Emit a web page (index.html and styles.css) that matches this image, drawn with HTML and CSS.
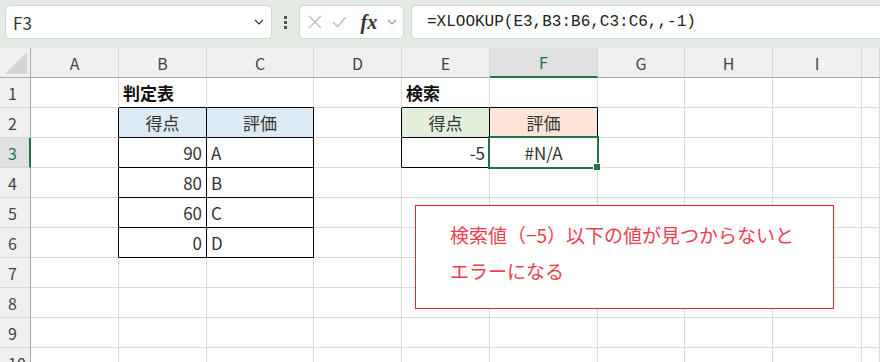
FILE: index.html
```html
<!DOCTYPE html>
<html lang="ja">
<head>
    <meta charset="UTF-8">
    <title>XLOOKUP</title>
    <link rel="stylesheet" href="styles.css">
</head>
<body>
    <div class="formula-bar">
        <div class="name-box">
            <span>F3</span>
            <svg class="chev" width="10" height="6" viewBox="0 0 10 6"><path d="M1 1l4 4 4-4" fill="none" stroke="#333" stroke-width="1.2"/></svg>
        </div>
        <div class="dots"><i></i><i></i><i></i></div>
        <div class="fx-box">
            <svg width="14" height="14" viewBox="0 0 14 14"><path d="M1 1l12 12M13 1L1 13" stroke="#bdbdbd" stroke-width="1.3"/></svg>
            <svg width="15" height="12" viewBox="0 0 15 12"><path d="M1 6l4.5 4.5L14 1" fill="none" stroke="#bdbdbd" stroke-width="1.3"/></svg>
            <span class="fx">fx</span>
            <svg width="10" height="6" viewBox="0 0 10 6"><path d="M1 1l4 4 4-4" fill="none" stroke="#999" stroke-width="1.1"/></svg>
        </div>
        <div class="formula">=XLOOKUP(E3,B3:B6,C3:C6,,-1)</div>
    </div>

    <div class="sheet">
        <div class="corner"><i></i></div>
        <div class="ch">A</div><div class="ch">B</div><div class="ch">C</div><div class="ch">D</div><div class="ch">E</div>
        <div class="ch sel">F</div><div class="ch">G</div><div class="ch">H</div><div class="ch">I</div><div class="ch"></div>

        <div class="rh">1</div>
        <div class="c"></div><div class="c bb bold">判定表</div><div class="c bb"></div><div class="c"></div>
        <div class="c bb bold">検索</div><div class="c bb"></div><div class="c"></div><div class="c"></div><div class="c"></div><div class="c"></div>

        <div class="rh">2</div>
        <div class="c br"></div><div class="c t blue mid">得点</div><div class="c t blue mid">評価</div><div class="c br"></div>
        <div class="c t green mid">得点</div><div class="c t orange mid">評価</div><div class="c"></div><div class="c"></div><div class="c"></div><div class="c"></div>

        <div class="rh sel">3</div>
        <div class="c br"></div><div class="c t num">90</div><div class="c t">A</div><div class="c br"></div>
        <div class="c t num">-5</div><div class="c t mid active">#N/A<span class="cursor"></span><span class="handle"></span></div><div class="c"></div><div class="c"></div><div class="c"></div><div class="c"></div>

        <div class="rh">4</div>
        <div class="c br"></div><div class="c t num">80</div><div class="c t">B</div><div class="c"></div>
        <div class="c"></div><div class="c"></div><div class="c"></div><div class="c"></div><div class="c"></div><div class="c"></div>

        <div class="rh">5</div>
        <div class="c br"></div><div class="c t num">60</div><div class="c t">C</div><div class="c"></div>
        <div class="c"></div><div class="c"></div><div class="c"></div><div class="c"></div><div class="c"></div><div class="c"></div>

        <div class="rh">6</div>
        <div class="c br"></div><div class="c t num">0</div><div class="c t">D</div><div class="c"></div>
        <div class="c"></div><div class="c"></div><div class="c"></div><div class="c"></div><div class="c"></div><div class="c"></div>

        <div class="rh">7</div>
        <div class="c"></div><div class="c"></div><div class="c"></div><div class="c"></div>
        <div class="c"></div><div class="c"></div><div class="c"></div><div class="c"></div><div class="c"></div><div class="c"></div>

        <div class="rh">8</div>
        <div class="c"></div><div class="c"></div><div class="c"></div><div class="c"></div>
        <div class="c"></div><div class="c"></div><div class="c"></div><div class="c"></div><div class="c"></div><div class="c"></div>

        <div class="rh">9</div>
        <div class="c"></div><div class="c"></div><div class="c"></div><div class="c"></div>
        <div class="c"></div><div class="c"></div><div class="c"></div><div class="c"></div><div class="c"></div><div class="c"></div>

        <div class="rh">10</div>
        <div class="c"></div><div class="c"></div><div class="c"></div><div class="c"></div>
        <div class="c"></div><div class="c"></div><div class="c"></div><div class="c"></div><div class="c"></div><div class="c"></div>

        <div class="note">検索値（−5）以下の値が見つからないと<br>エラーになる</div>
    </div>
</body>
</html>
```

FILE: styles.css
```css
body {
    margin: 0;
    height: 362px;
    overflow: hidden;
    background: #fff;
    font-family: "Noto Sans CJK JP", sans-serif;
    color: #333;
}

/* formula bar */
.formula-bar {
    height: 48px;
    box-sizing: border-box;
    padding: 5px 0 0 5px;
    background: #e4ebe4;
    display: flex;
    align-items: flex-start;
}

.name-box,
.fx-box,
.formula {
    height: 34px;
    box-sizing: border-box;
    background: #fff;
    border: 1px solid #d3d8d3;
    border-radius: 5px;
    display: flex;
    align-items: center;
}

.name-box {
    width: 267px;
    padding: 0 7px 0 7px;
    justify-content: space-between;
    font-size: 17px;
    color: #333;
}

.dots {
    width: 27px;
    height: 34px;
    display: flex;
    flex-direction: column;
    align-items: center;
    justify-content: center;
    gap: 2px;
}

.dots i {
    width: 3px;
    height: 3px;
    background: #555;
}

.fx-box {
    width: 105px;
    padding: 0 6px 0 8px;
    justify-content: space-between;
}

.fx {
    font-family: "Liberation Serif", serif;
    font-style: italic;
    font-weight: bold;
    font-size: 20px;
    color: #333;
    margin-left: 4px;
}

.formula {
    flex: 1;
    margin-left: 7px;
    margin-right: -10px;
    padding-left: 15px;
    font-family: "Liberation Mono", monospace;
    font-size: 16px;
    color: #222;
}

/* sheet */
.sheet {
    position: relative;
    display: grid;
    grid-template-columns: 31px 88px 88px 107px 88px 88px 108px 87px 88px 89px 1fr;
    grid-auto-rows: 30px;
}

.corner,
.ch,
.rh {
    background: #f0f0f0;
    box-sizing: border-box;
    display: flex;
    align-items: center;
    justify-content: center;
    font-size: 16px;
    color: #444;
}

.corner {
    border-right: 1px solid #a8a8a8;
    border-bottom: 1px solid #a8a8a8;
    position: relative;
}

.corner i {
    position: absolute;
    left: 5px;
    top: 4px;
    width: 22px;
    height: 22px;
    background: #d4d4d4;
    clip-path: polygon(100% 0, 100% 100%, 0 100%);
}

.ch {
    border-right: 1px solid #d6d6d6;
    border-bottom: 1px solid #a8a8a8;
}

.ch.sel {
    background: #e0e0e0;
    color: #217346;
    border-bottom: 2px solid #217346;
}

.rh {
    border-right: 1px solid #a8a8a8;
    border-bottom: 1px solid #d6d6d6;
    justify-content: flex-start;
    padding-left: 8px;
}

.rh.sel {
    background: #e0e0e0;
    color: #217346;
    border-right: 2px solid #217346;
}

.c {
    box-sizing: border-box;
    border-right: 1px solid #dadada;
    border-bottom: 1px solid #dadada;
    padding: 0 4px;
    display: flex;
    align-items: center;
    font-size: 17px;
    color: #333;
    white-space: nowrap;
}

.bold {
    font-weight: bold;
    color: #111;
}

.bb {
    border-bottom-color: #000;
}

.br {
    border-right-color: #000;
}

.t {
    border-right-color: #000;
    border-bottom-color: #000;
}

.num {
    justify-content: flex-end;
}

.mid {
    justify-content: center;
}

.blue {
    background: #ddebf7;
}

.green {
    background: #e2efda;
}

.orange {
    background: #fce4d6;
}

.active {
    position: relative;
}

.cursor {
    position: absolute;
    left: -2px;
    top: -2px;
    right: -2px;
    bottom: -2px;
    border: 2px solid #217346;
}

.handle {
    position: absolute;
    right: -4px;
    bottom: -4px;
    width: 6px;
    height: 6px;
    background: #217346;
    border: 1px solid #fff;
}

.note {
    position: absolute;
    left: 415px;
    top: 157px;
    width: 419px;
    height: 104px;
    box-sizing: border-box;
    border: 1px solid #e8202c;
    background: #fff;
    padding: 11px 0 0 34px;
    font-size: 19px;
    line-height: 36px;
    color: #ee3e4c;
}
```
